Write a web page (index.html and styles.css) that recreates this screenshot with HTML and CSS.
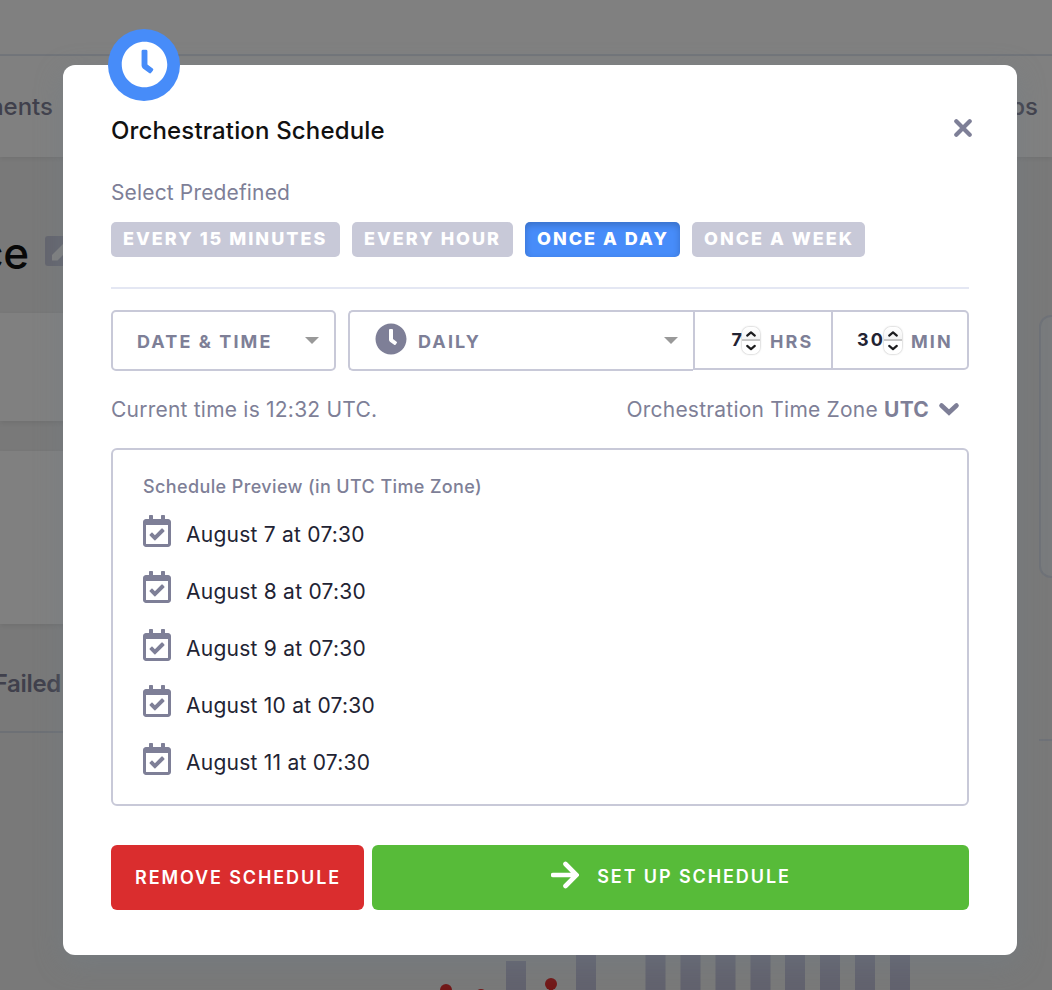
FILE: index.html
```html
<!DOCTYPE html>
<html lang="en">
<head>
<meta charset="utf-8">
<title>Orchestration Schedule</title>
<link rel="stylesheet" href="styles.css">
</head>
<body>
<svg class="defs" aria-hidden="true">
  <symbol id="clock" viewBox="0 0 512 512"><path d="M256 8C119 8 8 119 8 256s111 248 248 248 248-111 248-248S393 8 256 8zm92.500 313l-20 25a16 16 0 0 1-22.500 2.500l-67-49.700a40 40 0 0 1-15-31.200V112a16 16 0 0 1 16-16h32a16 16 0 0 1 16 16v144l58 42.500a16 16 0 0 1 2.500 22.500z"/></symbol>
  <symbol id="cal" viewBox="0 0 448 512"><path d="M400 64h-48V12c0-6.600-5.400-12-12-12h-40c-6.600 0-12 5.400-12 12v52H160V12c0-6.600-5.400-12-12-12h-40c-6.600 0-12 5.400-12 12v52H48C21.500 64 0 85.500 0 112v352c0 26.500 21.500 48 48 48h352c26.500 0 48-21.500 48-48V112c0-26.500-21.500-48-48-48zm-6 400H54c-3.300 0-6-2.700-6-6V160h352v298c0 3.300-2.700 6-6 6zm-52.800-200.200L198.800 405.100c-4.700 4.700-12.300 4.600-17-.1l-75.100-75.700c-4.700-4.700-4.600-12.300.1-17l28.400-28.200c4.700-4.700 12.300-4.600 17 .1l38.200 38.500 106-105.200c4.700-4.700 12.300-4.600 17 .1l28.200 28.400c4.700 4.800 4.600 12.300-.1 17z"/></symbol>
  <symbol id="spin" viewBox="0 0 18 27"><path d="M5.200 8.600 9 5.300l3.800 3.300M5.200 18.900 9 22.200l3.800-3.300" fill="none" stroke="#1c1c1e" stroke-width="2.200" stroke-linecap="round" stroke-linejoin="round"/></symbol>
</svg>
<div class="page">
  <div class="topbar"></div>
  <nav class="nav"><span class="nav-left">Components</span><span class="nav-right">Jobs</span></nav>
  <div class="columns">
    <main class="main">
      <div class="heading"><span class="heading-text">Salesforce</span><span class="edit"><svg viewBox="0 0 30 30"><path d="M7 24.500v-5.500L20 6l5.500 5.500-13 13z" fill="#808080"/></svg></span></div>
      <div class="card card-a"></div>
      <div class="card card-b"></div>
      <div class="tabs"><span>Failed</span></div>
      <svg class="chart" viewBox="0 0 1010 257">
        <g fill="#62626e"><path d="M506 228h20v29h-20zM576 180h20v77h-20zM645.500 180h20v77h-20zM680.500 180h20v77h-20zM715.500 180h20v77h-20zM750.500 180h20v77h-20zM785 180h20v77h-20zM820 180h20v77h-20zM855 180h20v77h-20zM890 180h20v77h-20z"/></g>
        <g fill="#721717"><circle cx="446" cy="257" r="6"/><circle cx="481" cy="262" r="6"/><circle cx="551" cy="251" r="6"/><path d="M549 251h4v6h-4z"/></g>
      </svg>
    </main>
    <aside class="side"><div class="side-box"></div><div class="side-line"></div></aside>
  </div>
</div>
<div class="overlay">
  <section class="modal">
    <div class="badge"><svg><use href="#clock"/></svg></div>
    <header class="modal-head">
      <h1>Orchestration Schedule</h1>
      <svg class="close" viewBox="0 0 18 18"><path d="m2.300 2.300 13.400 13.400M15.700 2.300 2.300 15.700" stroke="#7e7f97" stroke-width="4.200" stroke-linecap="round"/></svg>
    </header>
    <p class="label">Select Predefined</p>
    <div class="pills">
      <span class="pill p1">EVERY 15 MINUTES</span><span class="pill p2">EVERY HOUR</span><span class="pill p3 active">ONCE A DAY</span><span class="pill p4">ONCE A WEEK</span>
    </div>
    <div class="controls">
      <div class="select type"><span>DATE &amp; TIME</span><i class="caret"></i></div>
      <div class="select freq"><svg><use href="#clock"/></svg><span>DAILY</span><i class="caret"></i></div>
      <div class="num hrs"><b>7</b><span class="spinner"><svg><use href="#spin"/></svg></span><span class="unit">HRS</span></div>
      <div class="num min"><b>30</b><span class="spinner"><svg><use href="#spin"/></svg></span><span class="unit">MIN</span></div>
    </div>
    <div class="zone">
      <span class="now">Current time is 12:32 UTC.</span>
      <span class="tz"><span class="tz-label">Orchestration Time Zone <b>UTC</b></span><svg viewBox="0 0 22 14"><path d="m3.500 3.500 7.500 7 7.500-7" fill="none" stroke="#7e7f97" stroke-width="4.600" stroke-linecap="round" stroke-linejoin="miter"/></svg></span>
    </div>
    <div class="preview">
      <h2>Schedule Preview (in UTC Time Zone)</h2>
      <ul>
        <li><svg><use href="#cal"/></svg><span>August 7 at 07:30</span></li>
        <li><svg><use href="#cal"/></svg><span>August 8 at 07:30</span></li>
        <li><svg><use href="#cal"/></svg><span>August 9 at 07:30</span></li>
        <li><svg><use href="#cal"/></svg><span>August 10 at 07:30</span></li>
        <li><svg><use href="#cal"/></svg><span>August 11 at 07:30</span></li>
      </ul>
    </div>
    <footer class="actions">
      <div class="btn remove"><span>REMOVE SCHEDULE</span></div>
      <div class="btn setup"><svg viewBox="0 0 28 28"><path d="M2 14h22M14.500 3l11 11-11 11" fill="none" stroke="#fff" stroke-width="4.600" stroke-linecap="round"/></svg><span>SET UP SCHEDULE</span></div>
    </footer>
  </section>
</div>
</body>
</html>
```
FILE: styles.css
```css
* { box-sizing: border-box; }
body { margin: 0; width: 1052px; height: 990px; overflow: hidden; position: relative; background: #797979; font-family: Inter, "Liberation Sans", sans-serif; color: #7e7f97; }
.defs { position: absolute; width: 0; height: 0; }
h1, h2, p, ul { margin: 0; padding: 0; }
svg { display: block; flex: none; }
span { white-space: nowrap; }

.page { height: 990px; display: flex; flex-direction: column; overflow: hidden; }
.topbar { height: 56px; background: #808080; border-bottom: 2px solid #72757a; }
.nav { height: 101px; background: #808080; display: flex; justify-content: space-between; align-items: center; box-shadow: 0 2px 4px rgba(0,0,0,.06); color: #40404c; font-size: 24px; font-weight: 500; }
.nav-left { width: 53px; display: flex; justify-content: flex-end; }
.nav-right { width: 52px; display: flex; justify-content: flex-end; padding-right: 14px; }
.columns { display: flex; justify-content: space-between; }
.main { width: 1010px; }
.heading { height: 156px; display: flex; align-items: center; padding-top: 33px; gap: 16px; color: #080808; }
.heading-text { width: 29px; display: flex; justify-content: flex-end; padding-top: 2px; font-size: 44px; font-weight: 500; letter-spacing: -.2px; }
.edit { width: 30px; height: 30px; margin-bottom: 2px; background: #64656e; border-radius: 3px; }
.card { background: #808080; box-shadow: 0 2px 5px rgba(0,0,0,.08); }
.card-a { height: 108px; margin-bottom: 30px; }
.card-b { height: 173px; }
.tabs { height: 109px; display: flex; align-items: center; border-bottom: 2px solid #6d7075; padding-top: 12px; color: #40404c; font-size: 24px; font-weight: 600; }
.tabs span { width: 61px; display: flex; justify-content: flex-end; letter-spacing: -.3px; }
.chart { width: 1010px; height: 257px; }
.side { width: 13px; padding-top: 158px; }
.side-box { width: 100px; height: 263px; border: 2px solid #6f7278; border-radius: 12px; background: #797b7d; }
.side-line { height: 2px; margin-top: 161px; background: #6f7278; }

.overlay { position: absolute; inset: 0; padding: 65px 35px 35px 63px; }
.modal { position: relative; width: 954px; height: 890px; padding: 0 48px; border-radius: 12px; background: #fff; box-shadow: 0 8px 28px rgba(114,126,136,.45); }
.badge { position: absolute; left: 45px; top: -36px; width: 72px; height: 72px; border-radius: 50%; background: #478cf9; display: flex; justify-content: center; padding-top: 12px; }
.badge svg { width: 47px; height: 47px; fill: #fff; }
.modal-head { display: flex; justify-content: space-between; padding-top: 50px; height: 107px; }
h1 { color: #111; font-size: 24px; line-height: 31px; font-weight: 500; letter-spacing: .15px; }
.close { width: 18px; height: 18px; margin: 4px -3px 0 0; }
.label { height: 50px; padding-top: 7px; font-size: 21px; line-height: 27px; letter-spacing: .15px; }
.pills { height: 67px; display: flex; gap: 12px; border-bottom: 2px solid #e4e7f3; }
.pill { height: 35px; padding: 0 12px; border-radius: 5px; background: #c8c9d8; color: #fff; font-size: 18px; line-height: 33px; font-weight: 800; letter-spacing: 2px; }
.p1 { width: 229px; }
.p2 { width: 161px; }
.p3 { width: 155px; }
.p4 { width: 173px; }
.active { background: #478cf9; box-shadow: inset 0 3px 7px rgba(0,0,0,.2); }

.controls { display: flex; margin-top: 21px; height: 61px; font-size: 18px; font-weight: 700; letter-spacing: 2.100px; }
.select { height: 61px; border: 2px solid #c8c9d8; border-radius: 5px; display: flex; align-items: center; }
.select span { padding-top: 1px; }
.caret { width: 0; height: 0; margin-left: auto; border: 7px solid transparent; border-top-color: #999; border-bottom: 0; }
.type { width: 225px; padding: 0 15px 0 24px; margin-right: 12px; }
.freq { width: 345px; padding: 0 15px 0 25px; border-right: 0; border-radius: 5px 0 0 5px; }
.freq svg { width: 32px; height: 32px; fill: #7e7f97; margin: 0 11px 3px 0; }
.num { height: 60px; border: 2px solid #c8c9d8; display: flex; align-items: center; }
.hrs { border-right: 0; width: 138px; }
.min { border-radius: 0 5px 5px 0; width: 138px; }
.num b { width: 49px; text-align: right; color: #222333; font-weight: 700; margin-top: -2px; }
.min b { width: 52px; }
.spinner { width: 18px; height: 27px; margin: 0 10px 0 -2px; background: linear-gradient(#fff, #f4f4f4 12px, #c8c8c8 12.500px 13.500px, #fff 14px); border-radius: 7px; box-shadow: 0 0 2px #999; }
.min .spinner { margin: 0 9px 0 -1px; }
.spinner svg { width: 18px; height: 27px; }
.unit { padding-top: 3px; }

.zone { height: 77px; display: flex; justify-content: space-between; padding: 25px 9px 0 0; font-size: 21px; line-height: 27px; letter-spacing: .22px; }
.tz { display: flex; gap: 9px; }
.tz svg { width: 22px; height: 14px; margin-top: 6px; }
.preview { height: 358px; border: 2px solid #c8c9d8; border-radius: 6px; padding: 24px 30px 0; }
h2 { font-size: 18px; line-height: 26px; font-weight: 500; letter-spacing: .38px; }
ul { list-style: none; padding-top: 15px; }
li { height: 57px; display: flex; gap: 15px; color: #222333; font-size: 21px; line-height: 39px; letter-spacing: .24px; }
li svg { width: 28px; height: 32px; fill: #7e7f97; }
li:nth-child(even) svg { margin-top: -1px; }

.actions { display: flex; gap: 8px; margin-top: 39px; }
.btn { height: 65px; border-radius: 6px; display: flex; align-items: center; justify-content: center; color: #fff; font-size: 18px; font-weight: 600; letter-spacing: 1.900px; }
.remove { width: 253px; padding-left: 1px; background: #da2d2e; }
.setup { width: 597px; padding-left: 1px; gap: 18px; background: #57bb39; }
.setup svg { width: 28px; height: 28px; margin-bottom: 5px; }
.setup span { margin-bottom: 2px; }
```
